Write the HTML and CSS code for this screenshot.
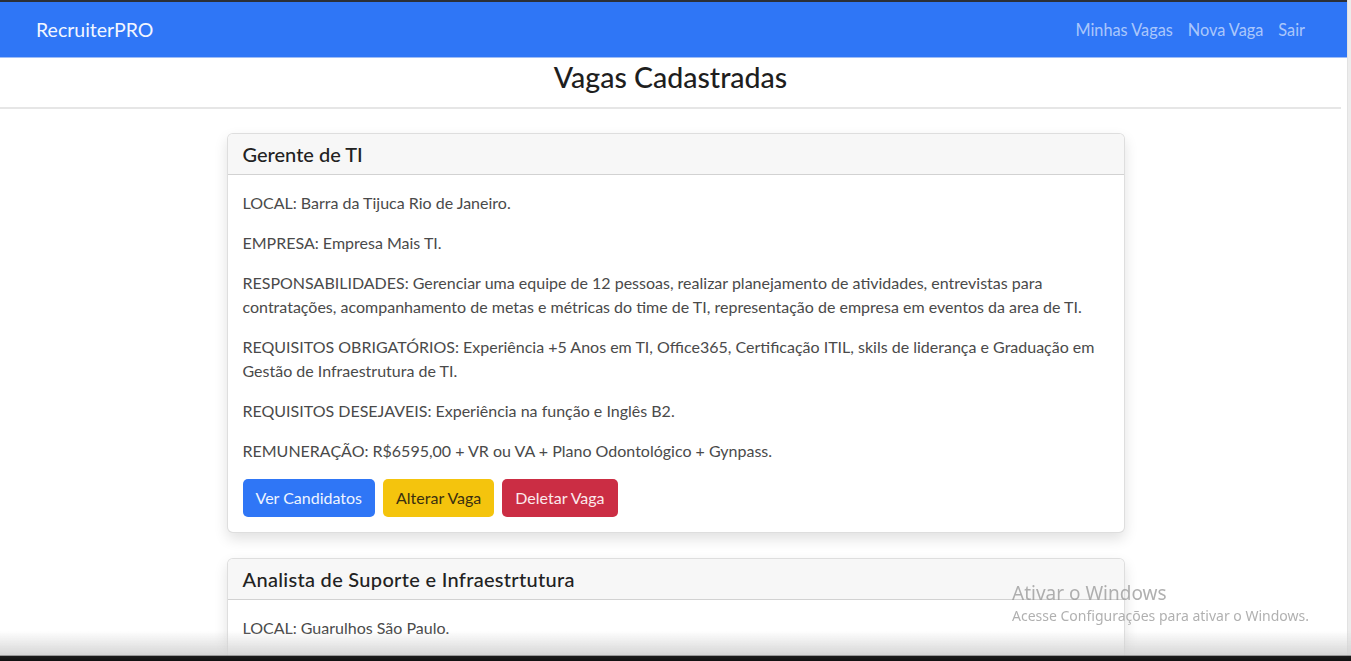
FILE: index.html
```html
<!DOCTYPE html>
<html lang="pt-BR">
<head>
<meta charset="utf-8">
<title>RecruiterPRO</title>
<link rel="stylesheet" href="styles.css">
</head>
<body>
<div class="topline"></div>
<nav class="navbar">
  <a class="brand" href="#">RecruiterPRO</a>
  <ul class="nav-links">
    <li><a href="#">Minhas Vagas</a></li>
    <li><a href="#">Nova Vaga</a></li>
    <li><a href="#">Sair</a></li>
  </ul>
</nav>
<header class="page-title">
  <h1>Vagas Cadastradas</h1>
</header>
<main class="list">
  <section class="card">
    <div class="card-header"><h2>Gerente de TI</h2></div>
    <div class="card-body">
      <p>LOCAL: Barra da Tijuca Rio de Janeiro.</p>
      <p>EMPRESA: Empresa Mais TI.</p>
      <p>RESPONSABILIDADES: Gerenciar uma equipe de 12 pessoas, realizar planejamento de atividades, entrevistas para contratações, acompanhamento de metas e métricas do time de TI, representação de empresa em eventos da area de TI.</p>
      <p>REQUISITOS OBRIGATÓRIOS: Experiência +5 Anos em TI, Office365, Certificação ITIL, skils de liderança e Graduação em Gestão de Infraestrutura de TI.</p>
      <p>REQUISITOS DESEJAVEIS: Experiência na função e Inglês B2.</p>
      <p>REMUNERAÇÃO: R$6595,00 + VR ou VA + Plano Odontológico + Gynpass.</p>
      <div class="actions">
        <a class="btn btn-primary" href="#">Ver Candidatos</a>
        <a class="btn btn-warning" href="#">Alterar Vaga</a>
        <a class="btn btn-danger" href="#">Deletar Vaga</a>
      </div>
    </div>
  </section>
  <section class="card">
    <div class="card-header"><h2 class="wide">Analista de Suporte e Infraestrtutura</h2></div>
    <div class="card-body short">
      <p>LOCAL: Guarulhos São Paulo.</p>
    </div>
  </section>
</main>
<div class="right-edge"></div>
<div class="bottom-fade"></div>
<div class="watermark">
  <div class="wm-title">Ativar o Windows</div>
  <div class="wm-sub">Acesse Configurações para ativar o Windows.</div>
</div>
</body>
</html>
```
FILE: styles.css
```css
* { box-sizing: border-box; }
html, body { margin: 0; padding: 0; }
body {
  font-family: Lato, "Liberation Sans", sans-serif;
  font-size: 16px;
  line-height: 24px;
  color: #212529;
  background: #fff;
  overflow: hidden;
  width: 1351px;
  height: 661px;
}
.topline { height: 2px; background: #2b2f36; }
.navbar {
  height: 56px;
  background: #2f76f6;
  display: flex;
  align-items: center;
  justify-content: space-between;
  padding: 0 43px 0 36px;
  margin-right: 3px;
  border-bottom: 1px solid #9fbdf6;
}
.brand {
  color: #f2f6ff;
  font-size: 19.5px;
  text-decoration: none;
}
.nav-links {
  list-style: none;
  display: flex;
  gap: 15px;
  margin: 0;
  padding: 0;
}
.nav-links a {
  color: rgba(255,255,255,0.6);
  text-decoration: none;
  font-size: 16.3px;
}
.page-title {
  border-bottom: 2px solid #e6e6e6;
  margin-right: 10px;
  height: 51px;
  text-align: center;
}
.page-title h1 {
  margin: 0;
  font-size: 28.5px;
  font-weight: 500;
  line-height: 38px;
  color: #1e1e1e;
}
.list {
  width: 898px;
  margin: 24px auto 0;
  display: flex;
  flex-direction: column;
  gap: 25px;
}
.card {
  border: 1px solid rgba(0,0,0,0.13);
  border-radius: 6px;
  background: #fff;
  box-shadow: 0 6px 14px rgba(0,0,0,0.12);
  overflow: hidden;
}
.card-header {
  background: #f7f7f7;
  border-bottom: 1px solid rgba(0,0,0,0.15);
  padding: 0 15px;
  height: 41px;
  display: flex;
  align-items: center;
}
.card-header h2 {
  margin: 0;
  font-size: 20px;
  font-weight: 500;
  color: #222;
}
.card-header h2.wide { letter-spacing: 0.3px; }
.card-body {
  padding: 16px 15px 15px;
  color: #4a4a4a;
}
.card-body.short { padding-bottom: 40px; }
.card-body p { margin: 0 0 16px; }
.card-body.short p { margin: 0; }
.actions { display: flex; gap: 8px; }
.btn {
  display: inline-block;
  padding: 6px 12px;
  border-radius: 5px;
  font-size: 16px;
  line-height: 24px;
  text-decoration: none;
  border: 1px solid transparent;
}
.btn-primary { background: #2f76f6; color: #eef4ff; }
.btn-warning { background: #f4c40d; color: #3a2f10; }
.btn-danger { background: #cb2d44; color: #fbe9ec; }
.right-edge {
  position: fixed;
  top: 0;
  right: 0;
  width: 4px;
  height: 661px;
  background: #ececec;
  border-left: 1px solid #e2e2e2;
}
.bottom-fade {
  position: fixed;
  left: 0;
  right: 0;
  bottom: 0;
  height: 30px;
  background: linear-gradient(to bottom, rgba(200,200,200,0) 0%, rgba(210,210,210,0.9) 80%, #1b1b1b 85%, #111 100%);
}
.watermark {
  position: fixed;
  left: 1012px;
  top: 580px;
  color: rgba(150,150,150,0.75);
  font-family: "Noto Sans", "Open Sans", sans-serif;
}
.wm-title { font-size: 19px; line-height: 26px; }
.wm-sub { font-size: 14px; line-height: 20px; }
```
